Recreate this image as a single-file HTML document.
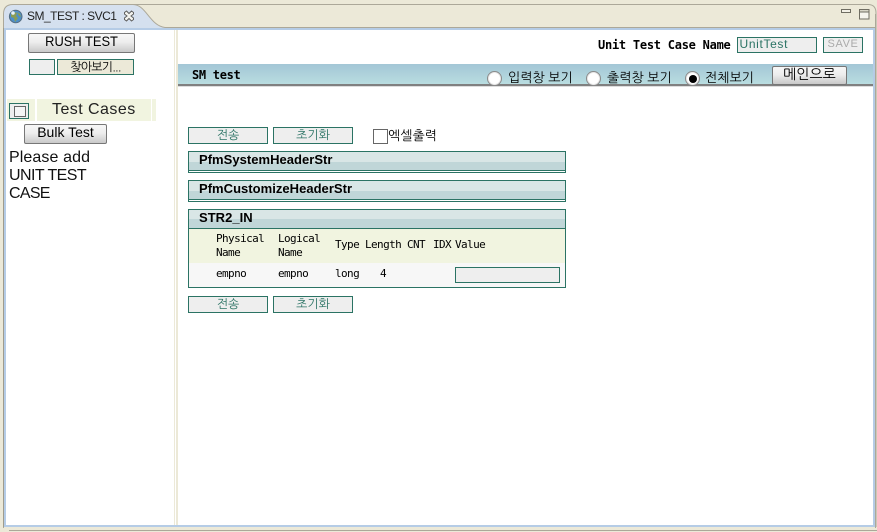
<!DOCTYPE html>
<html><head><meta charset="utf-8">
<style>
html,body{margin:0;padding:0;background:#ece9d8;}
body{width:877px;height:532px;position:relative;overflow:hidden;font-family:"Liberation Sans","NanumGothic",sans-serif;color:#000;}
.a{position:absolute;box-sizing:border-box;white-space:nowrap;}
.gb{background:linear-gradient(#f7f7f7,#ededed 45%,#c9c9c9);border:1px solid #777;border-radius:2px;text-align:center;}
.tb{background:#eeeeee;border:1px solid #2b7364;color:#2b7364;text-align:center;font:12px/15px "NanumGothic","Liberation Sans",sans-serif;}
.sec{left:188px;width:378px;border:1px solid #2b7364;background:linear-gradient(#d9e6e6 0,#d9e6e6 50%,#c0d6d8 50%,#c0d6d8 100%);font:bold 13px/15px "Liberation Sans",sans-serif;padding-left:10px;letter-spacing:.03px;}
.m{font:11px/14px "DejaVu Sans Mono","Liberation Mono",monospace;letter-spacing:-.6px;}
.k{font:13px/16px "NanumGothic","Noto Sans CJK KR",sans-serif;}
.r{width:15px;height:15px;border-radius:50%;background:#fff;border:1px solid #8a8a8a;box-shadow:inset 0 0 0 1px #e8e8e8;}
.sx{display:inline-block;transform:scaleX(.92);}
</style></head><body>

<!-- frame -->
<svg class="a" style="left:0;top:0" width="877" height="532">
<defs><linearGradient id="t" x1="0" y1="0" x2="0" y2="1"><stop offset="0" stop-color="#d6e1ef"/><stop offset="1" stop-color="#a9c3e4"/></linearGradient></defs>
<rect x="0" y="0" width="877" height="532" fill="#ece9d8"/>
<path d="M14 4.5H868Q876 4.5 876 13V527" fill="none" stroke="#aca899" stroke-width="1"/>
<path d="M3.5 530V14Q3.5 5 13 5H133C146 5 150 26 165 27.5H875V29H3.5Z" fill="url(#t)"/>
<path d="M3.5 28V14Q3.5 4.5 13 4.5H133C146 4.5 150 26 165 27.5H876" fill="none" stroke="#aca899"/>
<path d="M3.5 28V527" stroke="#a09c8c" stroke-width="1" fill="none"/>
<rect x="4" y="28" width="871" height="499" fill="#b5cce6"/>
<rect x="6" y="30" width="867" height="495" fill="#fff"/>
<rect x="174" y="30" width="1" height="495" fill="#ece9d8"/>
<rect x="176" y="30" width="2" height="495" fill="#ece9d8"/>
<rect x="9" y="530" width="868" height="1" fill="#aca899"/>
<rect x="3" y="527" width="1" height="1" fill="#aca899"/>
<rect x="875" y="14" width="1" height="514" fill="#aca899"/>
<!-- globe -->
<circle cx="15.7" cy="16.5" r="6.3" fill="#4d8fc9" stroke="#566d80"/>
<path d="M11 14q3-3 6-1l-1 3 2 2-3 4-1-4-3-1zM17 12l3 2 1 3-2-1z" fill="#8a9c55"/>
<circle cx="13" cy="13" r="1.8" fill="#e9f2fa"/>
<!-- close x -->
<path d="M124.5 12.5l2-1.5 2.5 2.5 2.5-2.5 2 1.5 0 1.5-2.5 2 2.5 2 0 1.5-2 1.5-2.5-2.5-2.5 2.5-2-1.5 0-1.5 2.5-2-2.5-2z" fill="#f4f4f0" stroke="#5f5f5f"/>
<!-- min/max -->
<rect x="841.5" y="9.5" width="9" height="3" fill="#f2f0e6" stroke="#6f6d62"/>
<rect x="859.5" y="9.5" width="9.5" height="9.5" fill="#f6f5ee" stroke="#6f6d62"/>
<rect x="859.5" y="9.5" width="9.5" height="2.5" fill="#d8d6c8" stroke="#6f6d62"/>
</svg>
<div class="a" style="left:27px;top:9px;font-size:12px;line-height:15px;color:#222;letter-spacing:-.5px;">SM_TEST : SVC1</div>

<!-- left panel -->
<div class="a gb" style="left:28px;top:33px;width:107px;height:20px;font-size:14px;line-height:15px;"><span class="sx">RUSH TEST</span></div>
<div class="a" style="left:29px;top:59px;width:26px;height:16px;background:#eee;border:1px solid #2b7364;"></div>
<div class="a k" style="left:57px;top:59px;width:77px;height:16px;background:#ece9d8;border:1px solid #2b7364;text-align:center;font-size:12px;line-height:14px;letter-spacing:-.8px;">찾아보기...</div>
<div class="a" style="left:7px;top:99px;width:149px;height:22px;background:#f1f4e0;"></div>
<div class="a" style="left:35px;top:99px;width:2px;height:22px;background:#fff;"></div>
<div class="a" style="left:151px;top:99px;width:1px;height:22px;background:#fff;"></div>
<div class="a" style="left:9px;top:103px;width:20px;height:16px;background:#eee;border:1px solid #2b7364;"></div>
<div class="a" style="left:14px;top:106px;width:12px;height:11px;background:#f5f5f5;border:1px solid #666;"></div>
<div class="a" style="left:52px;top:101px;font-size:16px;line-height:18px;color:#222;letter-spacing:.45px;">Test Cases</div>
<div class="a gb" style="left:24px;top:124px;width:83px;height:20px;font-size:14px;line-height:15px;">Bulk Test</div>
<div class="a" style="left:9px;top:149px;font-size:16px;line-height:18px;color:#111;"><span style="letter-spacing:.1px">Please add</span><br><span style="letter-spacing:-.55px">UNIT TEST</span><br><span style="letter-spacing:-.7px">CASE</span></div>

<!-- right header -->
<div class="a" style="left:598px;top:38px;font:bold 12px/14px 'DejaVu Sans Mono','Liberation Mono',monospace;letter-spacing:-.25px;">Unit Test Case Name</div>
<div class="a" style="left:737px;top:37px;width:80px;height:16px;background:#eee;border:1px solid #2b7364;color:#2b7364;font-size:12px;line-height:13px;padding-left:1.5px;letter-spacing:.65px;">UnitTest</div>
<div class="a" style="left:823px;top:37px;width:40px;height:16px;background:#eee;border:1px solid #2b7364;color:#aaa;font-size:11px;line-height:13px;text-align:center;letter-spacing:.6px;">SAVE</div>

<!-- title bar -->
<div class="a" style="left:178px;top:64px;width:695px;height:22px;background:linear-gradient(#a3c6d6,#b9dde0);border-bottom:2px solid #808080;box-shadow:0 1px 0 #ddd;"></div>
<div class="a" style="left:192px;top:68px;font:bold 12px/14px 'DejaVu Sans Mono','Liberation Mono',monospace;letter-spacing:-.3px;">SM test</div>
<div class="a r" style="left:487px;top:71px;"></div>
<div class="a k" style="left:508px;top:70px;">입력창 보기</div>
<div class="a r" style="left:586px;top:71px;"></div>
<div class="a k" style="left:607px;top:70px;">출력창 보기</div>
<div class="a r" style="left:685px;top:71px;"></div>
<div class="a" style="left:689px;top:75px;width:8px;height:8px;border-radius:50%;background:#000;"></div>
<div class="a k" style="left:705px;top:70px;">전체보기</div>
<div class="a gb k" style="left:772px;top:66px;width:75px;height:19px;font-size:14px;line-height:16px;">메인으로</div>

<!-- buttons row -->
<div class="a tb" style="left:188px;top:127px;width:80px;height:17px;">전송</div>
<div class="a tb" style="left:273px;top:127px;width:80px;height:17px;">초기화</div>
<div class="a" style="left:373px;top:129px;width:15px;height:15px;background:#fff;border:1px solid #666;"></div>
<div class="a k" style="left:388px;top:128px;">엑셀출력</div>

<!-- sections -->
<div class="a sec" style="top:151px;height:22px;box-shadow:inset 0 -1px 0 #fff,inset 0 -2px 0 #2b7364;">PfmSystemHeaderStr</div>
<div class="a sec" style="top:180px;height:22px;box-shadow:inset 0 -1px 0 #fff,inset 0 -2px 0 #2b7364;">PfmCustomizeHeaderStr</div>
<div class="a" style="left:188px;top:209px;width:378px;height:79px;border:1px solid #2b7364;background:#f7f7f7;">
  <div class="a" style="left:0;top:0;width:376px;height:19px;background:linear-gradient(#d9e6e6 50%,#c0d6d8 50%);border-bottom:1px solid #2b7364;font:bold 13px/15px 'Liberation Sans',sans-serif;padding-left:10px;letter-spacing:.03px;">STR2_IN</div>
  <div class="a" style="left:0;top:19px;width:376px;height:34px;background:#f1f4e0;"></div>
  <div class="a m" style="left:27px;top:22px;">Physical<br>Name</div>
  <div class="a m" style="left:89px;top:22px;">Logical<br>Name</div>
  <div class="a m" style="left:146px;top:28px;">Type</div>
  <div class="a m" style="left:176px;top:28px;">Length</div>
  <div class="a m" style="left:218px;top:28px;">CNT</div>
  <div class="a m" style="left:244px;top:28px;">IDX</div>
  <div class="a m" style="left:266px;top:28px;">Value</div>
  <div class="a m" style="left:27px;top:57px;">empno</div>
  <div class="a m" style="left:89px;top:57px;">empno</div>
  <div class="a m" style="left:146px;top:57px;">long</div>
  <div class="a m" style="left:191px;top:57px;">4</div>
  <div class="a" style="left:266px;top:57px;width:105px;height:16px;background:#eee;border:1px solid #2b7364;"></div>
</div>

<div class="a tb" style="left:188px;top:296px;width:80px;height:17px;">전송</div>
<div class="a tb" style="left:273px;top:296px;width:80px;height:17px;">초기화</div>
</body></html>
